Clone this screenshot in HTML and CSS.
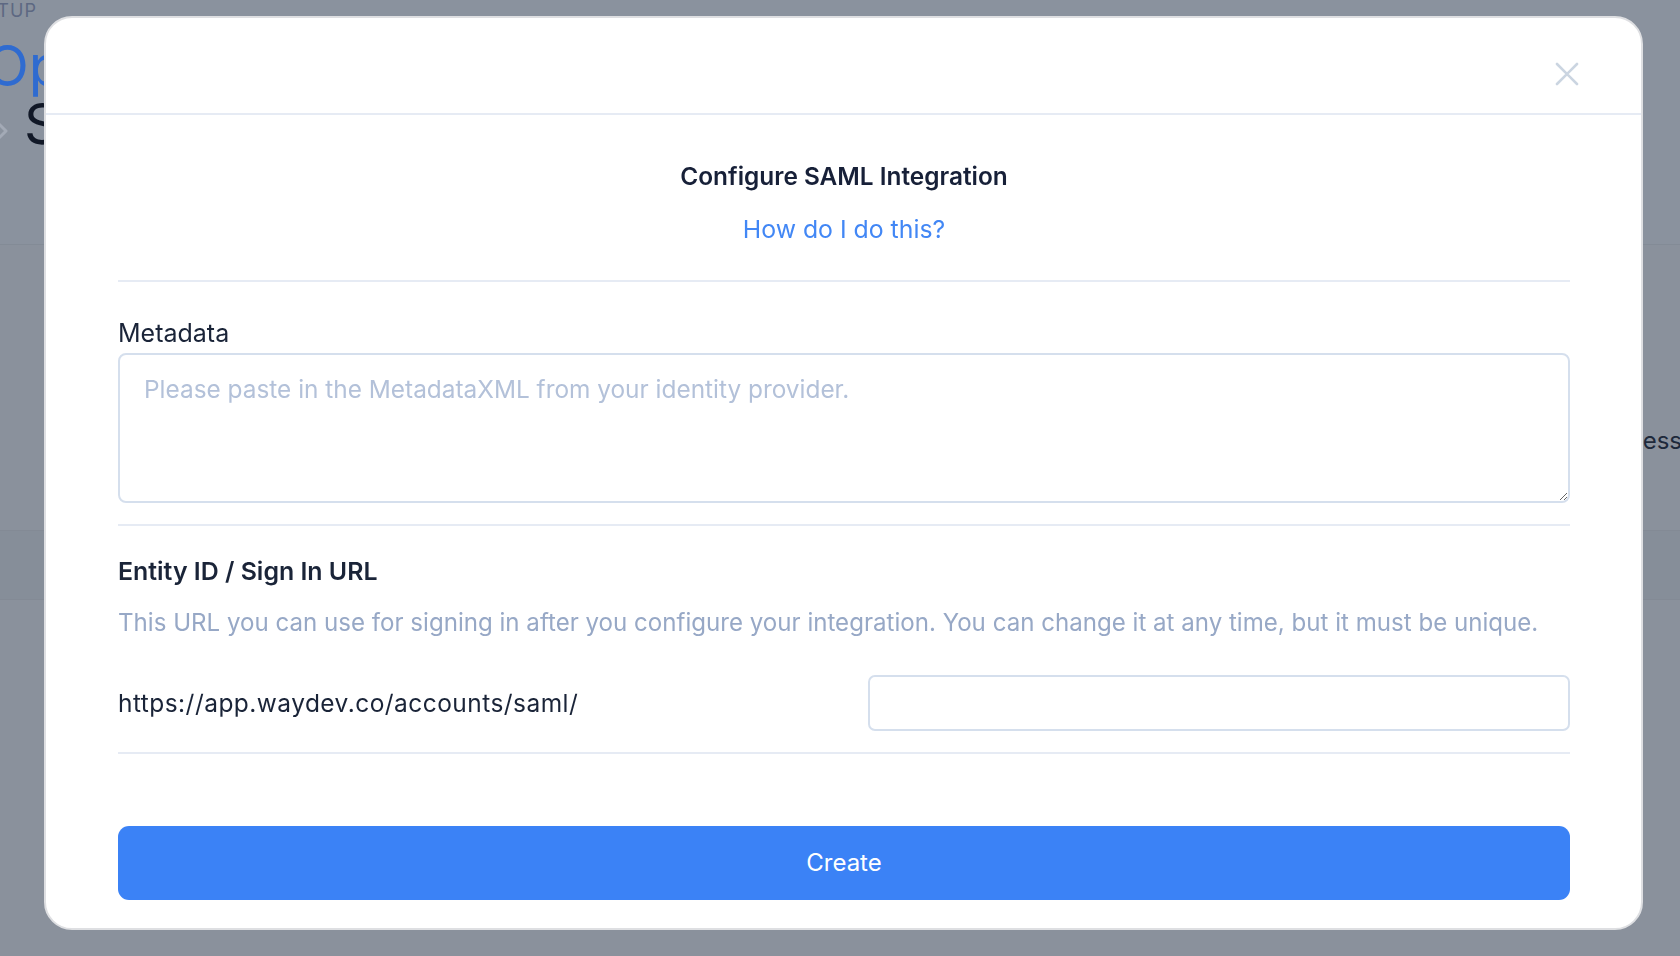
FILE: index.html
```html
<!DOCTYPE html>
<html lang="en">
<head>
<meta charset="utf-8">
<title>Configure SAML Integration</title>
<link rel="stylesheet" href="styles.css">
</head>
<body>
<div class="page">
  <div class="page-header">
    <div class="crumb">SETUP</div>
    <div class="page-title">Operations</div>
    <div class="sub-row">
      <svg class="chev" width="14" height="24" viewBox="0 0 14 24"><path d="M2 4 L10 12 L2 20" stroke="#a3aab6" stroke-width="3" fill="none" stroke-linecap="round" stroke-linejoin="round"/></svg>
      <span class="sub-title">SAML</span>
    </div>
  </div>
  <div class="page-body">
    <div class="row-a"><span class="row-text">Access</span></div>
    <div class="row-b"></div>
  </div>
</div>
<div class="modal">
  <div class="modal-header">
    <button class="close" aria-label="Close">
      <svg width="24" height="24" viewBox="0 0 24 24"><path d="M2 2 L22 22 M22 2 L2 22" stroke="#cbd5e1" stroke-width="2.6" stroke-linecap="round" fill="none"/></svg>
    </button>
  </div>
  <div class="modal-body">
    <h2 class="title">Configure SAML Integration</h2>
    <a class="help" href="#">How do I do this?</a>
    <div class="divider d1"></div>
    <label class="label">Metadata</label>
    <textarea class="metadata" placeholder="Please paste in the MetadataXML from your identity provider."></textarea>
    <div class="divider d2"></div>
    <h3 class="entity">Entity ID / Sign In URL</h3>
    <p class="desc">This URL you can use for signing in after you configure your integration. You can change it at any time, but it must be unique.</p>
    <div class="url-row">
      <span class="url">https://app.waydev.co/accounts/saml/</span>
      <input class="slug" type="text">
    </div>
    <div class="divider d3"></div>
    <button class="create">Create</button>
  </div>
</div>
</body>
</html>
```

FILE: styles.css
```css
* { box-sizing: border-box; }
html, body { margin: 0; padding: 0; }
body {
  width: 1680px;
  height: 956px;
  overflow: hidden;
  font-family: "Inter", "Noto Sans", sans-serif;
  background: #8a919c;
}

/* background page (seen through the dimmed backdrop) */
.page { width: 1680px; height: 956px; }
.page-header {
  height: 245px;
  background: #8a929e;
  border-bottom: 1px solid #838b96;
}
.crumb {
  margin-left: -27px;
  font-size: 18px;
  letter-spacing: 1px;
  color: #5d6882;
  line-height: 22px;
}
.page-title {
  margin-left: -14px;
  margin-top: 14px;
  font-size: 56px;
  line-height: 60px;
  color: #2f6bd0;
}
.sub-row { display: flex; align-items: center; margin-top: -2px; }
.chev { margin-left: -4px; margin-right: 14px; margin-top: 14px; }
.sub-title { font-size: 56px; line-height: 60px; color: #111827; }
.page-body { height: 711px; }
.row-a {
  height: 285px;
  display: flex;
  justify-content: flex-end;
  align-items: flex-start;
  padding-top: 180px;
  background: #8a919c;
}
.row-text { font-size: 24px; line-height: 32px; color: #1e293b; margin-right: -2px; }
.row-b { height: 70px; background: #868e99; border-top: 1px solid #838a95; border-bottom: 1px solid #838a95; }

/* modal */
.modal {
  position: fixed;
  left: 44px;
  top: 16px;
  width: 1599px;
  height: 914px;
  background: #ffffff;
  border: 2px solid #dedfe2;
  border-radius: 28px;
  display: flex;
  flex-direction: column;
}
.modal-header {
  height: 97px;
  flex: none;
  border-bottom: 2px solid #e6ebf4;
  display: flex;
  justify-content: flex-end;
  align-items: center;
  padding-right: 62px;
  padding-top: 16px;
}
.close {
  border: 0;
  background: none;
  padding: 0;
  width: 24px;
  height: 24px;
  cursor: pointer;
}
.close svg { display: block; }

.modal-body {
  padding: 45px 71px 0 72px;
  display: flex;
  flex-direction: column;
}
.title {
  margin: 0;
  text-align: center;
  font-size: 24.4px;
  line-height: 32px;
  font-weight: 600;
  color: #172038;
}
.help {
  margin-top: 21px;
  align-self: center;
  font-size: 24.8px;
  line-height: 32px;
  color: #4287f5;
  text-decoration: none;
}
.divider { height: 2px; background: #e6ebf4; flex: none; }
.d1 { margin-top: 35px; }
.label {
  margin-top: 35px;
  font-size: 25px;
  line-height: 32px;
  color: #1a2438;
}
.metadata {
  margin-top: 4px;
  height: 150px;
  width: 100%;
  border: 2px solid #d5dfed;
  border-radius: 8px;
  padding: 18px 24px;
  font-family: inherit;
  font-size: 24.4px;
  line-height: 32px;
  color: #1a2438;
  resize: vertical;
  outline: none;
}
.metadata::placeholder { color: #b3c1d9; }
.d2 { margin-top: 21px; }
.entity {
  margin: 29px 0 0;
  font-size: 24.9px;
  line-height: 32px;
  font-weight: 600;
  color: #1a2438;
}
.desc {
  margin: 20px 0 0;
  font-size: 24.1px;
  line-height: 32px;
  color: #97a8c6;
}
.url-row {
  margin-top: 36px;
  display: flex;
  align-items: center;
  justify-content: space-between;
}
.url { font-size: 24.5px; letter-spacing: 0.45px; color: #1a2438; }
.slug {
  width: 702px;
  height: 56px;
  border: 2px solid #d5dfed;
  border-radius: 7px;
  outline: none;
  font-family: inherit;
  font-size: 22px;
  padding: 0 16px;
}
.d3 { margin-top: 21px; }
.create {
  margin-top: 72px;
  height: 74px;
  width: 100%;
  border: 0;
  border-radius: 11px;
  background: #3b82f6;
  color: #ffffff;
  font-family: inherit;
  font-size: 24px;
  padding-bottom: 2px;
  cursor: pointer;
}
```
